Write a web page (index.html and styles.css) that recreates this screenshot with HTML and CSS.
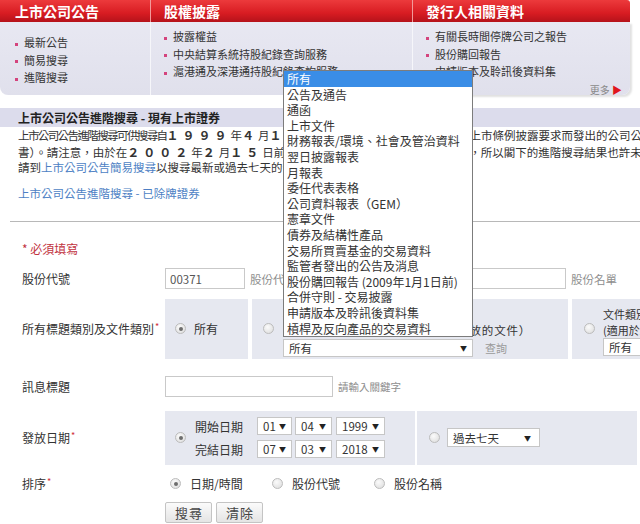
FILE: index.html
```html
<!DOCTYPE html>
<html lang="zh-Hant">
<head>
    <meta charset="UTF-8">
    <title>上市公司公告進階搜尋</title>
    <link rel="stylesheet" href="styles.css">
</head>
<body>
<div class="page">

    <div class="topnav">
        <div class="nav-col">
            <div class="nav-head">上市公司公告</div>
            <ul class="nav-list first">
                <li>最新公告</li>
                <li>簡易搜尋</li>
                <li>進階搜尋</li>
            </ul>
        </div>
        <div class="nav-col">
            <div class="nav-head">股權披露</div>
            <ul class="nav-list">
                <li>披露權益</li>
                <li>中央結算系統持股紀錄查詢服務</li>
                <li>滬港通及深港通持股紀錄查詢服務</li>
            </ul>
        </div>
        <div class="nav-col">
            <div class="nav-head">發行人相關資料</div>
            <ul class="nav-list last">
                <li>有關長時間停牌公司之報告</li>
                <li>股份購回報告</li>
                <li>申請版本及聆訊後資料集</li>
                <li class="more">更多 <span class="tri">&#9654;</span></li>
            </ul>
        </div>
    </div>

    <div class="section-title">上市公司公告進階搜尋 - 現有上市證券</div>

    <div class="intro">
        <div class="line"><span class="tight">上市公司公告進階搜尋可供搜尋自</span><span class="num">１９９９</span>年<span class="num">４</span>月<span class="num">１</span>日起，根據主板及創業板上市規則及上市條例披露要求而發出的公司公告及通告（例如上市文件</div>
        <div class="line">書）。請注意，由於在<span class="num">２００２</span>年<span class="num">２</span>月<span class="num">１５</span>日前部份的公告及通告未有分類標題類別，所以閣下的進階搜尋結果也許未能包括所有文件。</div>
        <div class="line">請到<a href="#">上市公司公告簡易搜尋</a>以搜尋最新或過去七天的公告及通告。</div>
    </div>

    <a class="delisted" href="#">上市公司公告進階搜尋 - 已除牌證券</a>

    <div class="rule"></div>

    <div class="required">* 必須填寫</div>

    <div class="form">
        <div class="row row-code">
            <div class="label">股份代號</div>
            <input class="field code" type="text" value="00371">
            <span class="hint">股份代號</span>
            <input class="field name" type="text">
            <span class="hint">股份名單</span>
        </div>

        <div class="row row-cat">
            <div class="label">所有標題類別及文件類別<span class="star">*</span></div>
            <div class="panel p-all">
                <span class="radio on"></span>
                <span>所有</span>
            </div>
            <div class="panel p-title">
                <span class="radio"></span>
                <div class="stack">
                    <div class="cap">標題類別</div>
                    <div class="cap long">（適用於2007年6月25日或以後發放的文件）</div>
                    <div class="inline">
                        <div class="select wide-select">所有</div>
                        <span class="query">查詢</span>
                    </div>
                </div>
            </div>
            <div class="panel p-doc">
                <span class="radio"></span>
                <div class="stack">
                    <div class="cap">文件類別</div>
                    <div class="cap">(適用於2007年6月25日以前發放的文件)</div>
                    <div class="select">所有</div>
                </div>
            </div>
        </div>

        <div class="row row-headline">
            <div class="label">訊息標題</div>
            <input class="field headline" type="text">
            <span class="hint small">請輸入關鍵字</span>
        </div>

        <div class="row row-date">
            <div class="label">發放日期<span class="star">*</span></div>
            <div class="panel p-range">
                <span class="radio on"></span>
                <div class="dates">
                    <div class="date-line">
                        <span class="date-label">開始日期</span>
                        <div class="select s-dd">01</div>
                        <div class="select s-mm">04</div>
                        <div class="select s-yy">1999</div>
                    </div>
                    <div class="date-line">
                        <span class="date-label">完結日期</span>
                        <div class="select s-dd">07</div>
                        <div class="select s-mm">03</div>
                        <div class="select s-yy">2018</div>
                    </div>
                </div>
            </div>
            <div class="panel p-period">
                <span class="radio"></span>
                <div class="select s-period">過去七天</div>
            </div>
        </div>

        <div class="row row-sort">
            <div class="label">排序<span class="star">*</span></div>
            <label class="opt"><span class="radio on"></span>日期/時間</label>
            <label class="opt"><span class="radio"></span>股份代號</label>
            <label class="opt"><span class="radio"></span>股份名稱</label>
        </div>

        <div class="buttons">
            <button class="btn">搜尋</button>
            <button class="btn">清除</button>
        </div>
    </div>

    <!-- open list of the title category select -->
    <ul class="dropdown">
        <li class="selected">所有</li>
        <li>公告及通告</li>
        <li>通函</li>
        <li>上市文件</li>
        <li>財務報表/環境、社會及管治資料</li>
        <li>翌日披露報表</li>
        <li>月報表</li>
        <li>委任代表表格</li>
        <li>公司資料報表（GEM）</li>
        <li>憲章文件</li>
        <li>債券及結構性產品</li>
        <li>交易所買賣基金的交易資料</li>
        <li>監管者發出的公告及消息</li>
        <li>股份購回報告 (2009年1月1日前)</li>
        <li>合併守則 - 交易披露</li>
        <li>申請版本及聆訊後資料集</li>
        <li>槓桿及反向產品的交易資料</li>
    </ul>

</div>
</body>
</html>
```

FILE: styles.css
```css
* {
    box-sizing: border-box;
}

body {
    margin: 0;
    width: 640px;
    height: 524px;
    overflow: hidden;
    background: #fff;
    color: #333;
    font-family: "Noto Sans CJK TC", "Noto Sans", sans-serif;
    font-size: 12px;
}

.page {
    position: relative;
    width: 640px;
    overflow: hidden;
}

/* top menu */
.topnav {
    display: grid;
    grid-template-columns: 150px 262px 218px;
    width: 630px;
}

.nav-head {
    height: 22px;
    line-height: 22px;
    padding-left: 13px;
    color: #fff;
    font-size: 14px;
    font-weight: bold;
    background: linear-gradient(#ec3a3c, #d81c22 60%, #b5121a);
    border-left: 1px solid #f29a9a;
}

.nav-col:first-child .nav-head {
    border-left: 0;
    padding-left: 15px;
}

.nav-col:last-child .nav-head {
    border-top-right-radius: 3px;
}

.nav-list {
    list-style: none;
    margin: 0;
    height: 73px;
    padding: 6px 0 0 13px;
    font-size: 11px;
    line-height: 17.5px;
    background: linear-gradient(#e8e8f2, #e0e0ec);
    border-left: 1px solid #f6f6fa;
}

.nav-list.first {
    padding: 12px 0 0 15px;
    border-left: 0;
    border-bottom-left-radius: 8px;
}

.nav-list.last {
    border-bottom-right-radius: 8px;
    box-shadow: 2px 2px 2px rgba(0, 0, 0, 0.12);
}

.nav-list li {
    white-space: nowrap;
}

.nav-list li::before {
    content: "";
    display: inline-block;
    width: 3px;
    height: 3px;
    margin-right: 6px;
    vertical-align: middle;
    background: #d4437d;
}

.nav-list li.more {
    text-align: right;
    padding-right: 8px;
    color: #8a8a8a;
    font-size: 10px;
}

.nav-list li.more::before {
    display: none;
}

.tri {
    color: #e0161e;
    font-size: 10px;
}

/* heading + intro */
.section-title {
    margin-top: 13px;
    height: 19px;
    line-height: 19px;
    padding-left: 18px;
    background: #dcdcec;
    font-size: 12px;
    font-weight: bold;
    color: #222;
}

.intro {
    padding: 0 0 0 18px;
    font-size: 11.5px;
    line-height: 15.5px;
}

.intro .line {
    white-space: nowrap;
    overflow: hidden;
}

.tight {
    letter-spacing: -1.6px;
}

.num {
    font-weight: bold;
    letter-spacing: 4px;
    font-size: 12px;
}

.intro a,
.delisted {
    color: #4d7fc4;
    text-decoration: none;
}

.delisted {
    display: block;
    margin-top: 9px;
    padding-left: 18px;
    font-size: 11.5px;
    line-height: 16px;
}

.rule {
    margin: 20px 0 0 10px;
    border-top: 1px solid #b8b8b8;
}

.required {
    margin-top: 19px;
    padding-left: 22px;
    color: #c2343f;
    font-size: 12px;
    line-height: 16px;
}

/* form */
.row {
    display: flex;
    align-items: center;
}

.label {
    flex: none;
    width: 165px;
    padding-left: 22px;
    font-size: 12px;
    color: #333;
}

.star {
    color: #d0303a;
    font-size: 9px;
    vertical-align: top;
    margin-left: 1px;
}

.field {
    height: 21px;
    margin: 0;
    padding: 0 4px;
    border: 1px solid #c9c9c9;
    background: #fff;
    font-family: inherit;
    font-size: 11.5px;
    color: #555;
    outline: none;
}

.hint {
    color: #8e8e8e;
    font-size: 11.5px;
    margin-left: 5px;
    white-space: nowrap;
}

.hint.small {
    font-size: 10.5px;
}

.row-code {
    margin-top: 11px;
    height: 22px;
}

.field.code {
    width: 80px;
}

.field.name {
    width: 264px;
    margin-left: 6px;
}

.row-cat {
    margin-top: 9px;
    height: 60px;
    align-items: stretch;
}

.row-cat .label {
    align-self: center;
}

.panel {
    display: flex;
    align-items: center;
    background: #e6e8f0;
    flex: none;
}

.p-all {
    width: 83px;
    padding-left: 10px;
    gap: 8px;
}

.p-title {
    width: 316px;
    margin-left: 4px;
    padding-left: 11px;
    gap: 9px;
}

.p-doc {
    width: 68px;
    margin-left: 4px;
    padding-left: 12px;
    gap: 8px;
    overflow: hidden;
}

.stack {
    display: flex;
    flex-direction: column;
    align-self: flex-start;
    padding-top: 7px;
    white-space: nowrap;
}

.cap {
    font-size: 11px;
    line-height: 16px;
}

.cap.long {
    font-size: 11.5px;
    letter-spacing: 0.85px;
}

.inline {
    display: flex;
    align-items: center;
    margin-top: 1px;
}

.query {
    margin-left: 12px;
    color: #9a9a9a;
    font-size: 11px;
}

.select {
    display: flex;
    align-items: center;
    justify-content: space-between;
    height: 18px;
    padding: 0 5px;
    background: #fff;
    border: 1px solid #c6c6c6;
    font-size: 11.5px;
    color: #333;
}

.select::after {
    content: "\25BC";
    font-size: 7px;
    color: #222;
}

.wide-select {
    width: 190px;
}

.p-doc .select {
    width: 60px;
    flex: none;
}

.row-headline {
    margin-top: 17px;
    height: 21px;
}

.field.headline {
    width: 168px;
}

.row-date {
    margin-top: 14px;
    height: 54px;
    align-items: stretch;
}

.row-date .label {
    align-self: center;
}

.p-range {
    width: 250px;
    padding-left: 10px;
    gap: 9px;
}

.dates {
    display: flex;
    flex-direction: column;
    gap: 5px;
}

.date-line {
    display: flex;
    align-items: center;
    gap: 3px;
}

.date-label {
    width: 59px;
    font-size: 12px;
}

.s-dd {
    width: 35px;
}

.s-mm {
    width: 37px;
}

.s-yy {
    width: 49px;
    margin-left: 1px;
}

.p-period {
    width: 220px;
    margin-left: 2px;
    padding-left: 12px;
    gap: 7px;
}

.s-period {
    width: 93px;
    height: 19px;
    padding-right: 8px;
}

.radio {
    position: relative;
    flex: none;
    display: inline-block;
    width: 11px;
    height: 11px;
    border-radius: 50%;
    border: 1px solid #bcbcbc;
    background: radial-gradient(circle at 40% 35%, #fbfbfb, #dadada);
}

.radio.on::after {
    content: "";
    position: absolute;
    left: 2.5px;
    top: 2.5px;
    width: 4px;
    height: 4px;
    border-radius: 50%;
    background: #6d6d6d;
}

.row-sort {
    margin-top: 11px;
    height: 16px;
}

.opt {
    display: flex;
    align-items: center;
    gap: 9px;
    width: 102px;
    font-size: 12px;
}

.row-sort .label + .opt {
    margin-left: 5px;
}

.buttons {
    display: flex;
    gap: 4px;
    margin: 10px 0 0 165px;
}

.btn {
    height: 21px;
    padding: 0 8px 0 9px;
    border: 1px solid #c4c4c4;
    border-radius: 2px;
    background: linear-gradient(#fbfbfb, #e4e4e4);
    font-family: inherit;
    font-size: 13px;
    letter-spacing: 1px;
    color: #444;
    line-height: 19px;
}

/* open select list */
.dropdown {
    position: absolute;
    left: 283px;
    top: 70px;
    width: 190px;
    margin: 0;
    padding: 0;
    list-style: none;
    background: #fff;
    border: 1px solid #7c7c7c;
    font-size: 12px;
    line-height: 15.6px;
}

.dropdown li {
    padding-left: 3px;
    white-space: nowrap;
}

.dropdown li.selected {
    background: #3a8de6;
    color: #fff;
}
```
